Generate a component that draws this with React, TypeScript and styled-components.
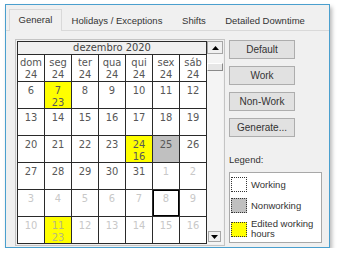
import React from "react";
import styled, { createGlobalStyle } from "styled-components";

const GlobalStyle = createGlobalStyle`
  html, body {
    margin: 0;
    padding: 0;
    background: #ffffff;
  }
  body {
    font-family: "Liberation Sans", Arial, sans-serif;
  }
`;

type Day = {
  n: number;
  other?: boolean;
  hours?: string;
  kind?: "edited" | "non";
  focus?: boolean;
};

const weekdays = ["dom", "seg", "ter", "qua", "qui", "sex", "sáb"];

const weeks: Day[][] = [
  [{ n: 6 }, { n: 7, kind: "edited", hours: "23" }, { n: 8 }, { n: 9 }, { n: 10 }, { n: 11 }, { n: 12 }],
  [{ n: 13 }, { n: 14 }, { n: 15 }, { n: 16 }, { n: 17 }, { n: 18 }, { n: 19 }],
  [{ n: 20 }, { n: 21 }, { n: 22 }, { n: 23 }, { n: 24, kind: "edited", hours: "16" }, { n: 25, kind: "non" }, { n: 26 }],
  [{ n: 27 }, { n: 28 }, { n: 29 }, { n: 30 }, { n: 31 }, { n: 1, other: true }, { n: 2, other: true }],
  [3, 4, 5, 6, 7, 8, 9].map(n => ({ n, other: true, focus: n === 8 })),
  [10, 11, 12, 13, 14, 15, 16].map(n =>
    n === 11 ? { n, other: true, kind: "edited" as const, hours: "23" } : { n, other: true }
  )
];

const tabs = [
  { label: "General", width: 53, active: true },
  { label: "Holidays / Exceptions", width: 110 },
  { label: "Shifts", width: 44 },
  { label: "Detailed Downtime", width: 98 }
];

export default function App() {
  return (
    <>
      <GlobalStyle />
      <Window>
        <TabBar>
          {tabs.map(t => (
            <Tab key={t.label} $active={!!t.active} $width={t.width}>
              {t.label}
            </Tab>
          ))}
        </TabBar>
        <Panel>
          <CalendarFrame>
            <CalendarColumn>
              <MonthHeader>dezembro 2020</MonthHeader>
              <Grid>
                {weekdays.map(w => (
                  <HeadCell key={w}>
                    <span>{w}</span>
                    <span>24</span>
                  </HeadCell>
                ))}
                {weeks.flat().map((d, i) => (
                  <DayCell key={i} $kind={d.kind} $other={!!d.other} $focus={!!d.focus}>
                    <span>{d.n}</span>
                    {d.hours && <span>{d.hours}</span>}
                  </DayCell>
                ))}
              </Grid>
            </CalendarColumn>
            <ScrollBar>
              <ScrollButton>
                <svg width="7" height="4" viewBox="0 0 7 4">
                  <path d="M0 4 L3.5 0 L7 4 Z" fill="#000" />
                </svg>
              </ScrollButton>
              <Thumb />
              <ScrollSpacer />
              <ScrollButton $small>
                <svg width="7" height="4" viewBox="0 0 7 4">
                  <path d="M0 0 L7 0 L3.5 4 Z" fill="#000" />
                </svg>
              </ScrollButton>
            </ScrollBar>
          </CalendarFrame>
          <Side>
            <Button>Default</Button>
            <Button>Work</Button>
            <Button>Non-Work</Button>
            <Button>Generate...</Button>
            <LegendLabel>Legend:</LegendLabel>
            <LegendBox>
              <LegendItem>
                <Swatch $color="#ffffff" />
                <LegendText>Working</LegendText>
              </LegendItem>
              <LegendItem>
                <Swatch $color="#c0c0c0" />
                <LegendText>Nonworking</LegendText>
              </LegendItem>
              <LegendItem>
                <Swatch $color="#ffff00" />
                <LegendText>
                  Edited working
                  <br />
                  hours
                </LegendText>
              </LegendItem>
            </LegendBox>
          </Side>
        </Panel>
      </Window>
    </>
  );
}

const Window = styled.div`
  box-sizing: border-box;
  margin: 4px 0 0 5px;
  width: 325px;
  height: 244px;
  border: 1px solid #4a9fce;
  background: #f0f0f0;
  box-shadow: 2px 3px 4px rgba(0, 0, 0, 0.28);
  overflow: hidden;
`;

const TabBar = styled.div`
  display: flex;
  align-items: flex-end;
  height: 25px;
  padding-left: 3px;
  border-bottom: 1px solid #d9d9d9;
`;

const Tab = styled.div<{ $active: boolean; $width: number }>`
  box-sizing: border-box;
  width: ${p => p.$width}px;
  height: ${p => (p.$active ? 22 : 20)}px;
  margin-bottom: ${p => (p.$active ? -1 : 0)}px;
  padding-bottom: ${p => (p.$active ? 2 : 0)}px;
  display: flex;
  align-items: center;
  justify-content: center;
  font-size: 9.5px;
  color: #333;
  background: #f0f0f0;
  border: ${p => (p.$active ? "1px solid #d9d9d9" : "none")};
  border-bottom: none;
  white-space: nowrap;
`;

const Panel = styled.div`
  display: flex;
  align-items: flex-start;
  padding: 8px 0 0 9px;
`;

const CalendarFrame = styled.div`
  display: flex;
  border: 1px solid #c4c4c4;
  padding: 1px;
  background: #f0f0f0;
`;

const CalendarColumn = styled.div`
  display: flex;
  flex-direction: column;
  width: 190px;
  font-family: "DejaVu Sans Condensed", "DejaVu Sans", sans-serif;
`;

const MonthHeader = styled.div`
  height: 12px;
  border: 1px solid #2a2a2a;
  border-bottom: none;
  background: #f0f0f0;
  font-size: 11px;
  line-height: 12px;
  text-align: center;
  color: #444;
`;

const Grid = styled.div`
  display: grid;
  grid-template-columns: repeat(7, 26px);
  grid-auto-rows: 26px;
  gap: 1px;
  padding: 1px;
  background: #2a2a2a;
`;

const HeadCell = styled.div`
  display: flex;
  flex-direction: column;
  align-items: center;
  padding-top: 2px;
  background: #ffffff;
  font-size: 11px;
  line-height: 12px;
  color: #555;
`;

const DayCell = styled.div<{ $kind?: "edited" | "non"; $other: boolean; $focus: boolean }>`
  display: flex;
  flex-direction: column;
  align-items: center;
  padding-top: 3px;
  box-sizing: border-box;
  background: ${p => (p.$kind === "edited" ? "#ffff00" : p.$kind === "non" ? "#c0c0c0" : "#ffffff")};
  font-size: 11px;
  line-height: 12px;
  color: ${p => (p.$other ? (p.$kind === "edited" ? "#b8b880" : "#c8c8c8") : "#585858")};
  box-shadow: ${p => (p.$focus ? "inset 0 0 0 1px #000" : "none")};
`;

const ScrollBar = styled.div`
  display: flex;
  flex-direction: column;
  width: 16px;
  background: #f4f4f4;
`;

const ScrollButton = styled.div<{ $small?: boolean }>`
  box-sizing: border-box;
  height: ${p => (p.$small ? 11 : 13)}px;
  margin: ${p => (p.$small ? "0 2px 2px 1px" : "0")};
  display: flex;
  align-items: center;
  justify-content: center;
  border: 1px solid #a6a6a6;
  background: #f0f0f0;
`;

const Thumb = styled.div`
  height: 6px;
  margin-top: 9px;
  border-top: 1px solid #ffffff;
  border-bottom: 1px solid #8a8a8a;
  border-left: 1px solid #ffffff;
  border-right: 1px solid #8a8a8a;
  background: #e6e6e6;
`;

const ScrollSpacer = styled.div`
  flex: 1;
`;

const Side = styled.div`
  display: flex;
  flex-direction: column;
  width: 93px;
  margin: 1px 0 0 4px;
  font-family: "Liberation Sans", Arial, sans-serif;
`;

const Button = styled.div`
  box-sizing: border-box;
  width: 66px;
  height: 19px;
  margin-bottom: 7px;
  display: flex;
  align-items: center;
  justify-content: center;
  border: 1px solid #adadad;
  background: #e1e1e1;
  font-size: 10px;
  color: #333;
`;

const LegendLabel = styled.div`
  margin-top: 10px;
  font-size: 9.5px;
  line-height: 12px;
  color: #333;
`;

const LegendBox = styled.div`
  box-sizing: border-box;
  margin-top: 6px;
  height: 71px;
  padding: 4px 0 0 1px;
  border: 1px solid #a8a8a8;
  background: #ffffff;
  display: flex;
  flex-direction: column;
  gap: 6px;
`;

const LegendItem = styled.div`
  display: flex;
  align-items: center;
  min-height: 15px;
`;

const Swatch = styled.div<{ $color: string }>`
  box-sizing: border-box;
  flex: none;
  width: 16px;
  height: 15px;
  border: 1px dotted #333;
  background: ${p => p.$color};
`;

const LegendText = styled.div`
  margin-left: 4px;
  font-size: 9.5px;
  line-height: 10px;
  color: #333;
`;
